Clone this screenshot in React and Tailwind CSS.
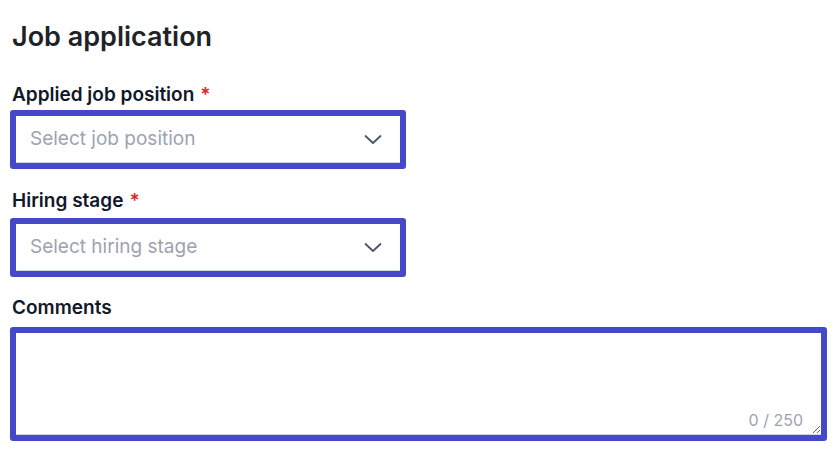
import { useState } from "react";

function Chevron() {
    return (
        <svg width="20" height="20" viewBox="0 0 20 20" fill="none" stroke="#4b5563" strokeWidth="1.8" strokeLinecap="round" strokeLinejoin="round">
            <path d="M2.5 7l7.5 7 7.5-7" />
        </svg>
    );
}

function Label({ children, required }) {
    return (
        <div className="h-[26px] flex items-center text-[19px] font-semibold text-[#111827] leading-none">
            {children}
            {required && <span className="text-[#dc2626] ml-[6px]">*</span>}
        </div>
    );
}

function SelectBox({ placeholder }) {
    return (
        <div className="ml-[-2px] w-[396px] h-[59px] border-[6px] border-[#4349c9] rounded-[3px] bg-white">
            <div className="h-full flex items-center justify-between pl-[14px] pr-[17px] border-b border-[#d1d5db]">
                <span className="text-[19px] text-[#9ca3af]">{placeholder}</span>
                <Chevron />
            </div>
        </div>
    );
}

export default function App() {
    const [comment, setComment] = useState("");

    return (
        <div className="w-[837px] h-[449px] bg-white pl-[12px] pt-[20px] font-['Inter','Noto_Sans',sans-serif] text-[#111827]">
            <h1 className="text-[27px] font-semibold leading-[34px] text-[#1f2328]">Job application</h1>

            <div className="mt-[27px]">
                <Label required>Applied job position</Label>
                <div className="mt-[3px]">
                    <SelectBox placeholder="Select job position" />
                </div>
            </div>

            <div className="mt-[18px]">
                <Label required>Hiring stage</Label>
                <div className="mt-[5px]">
                    <SelectBox placeholder="Select hiring stage" />
                </div>
            </div>

            <div className="mt-[17px]">
                <Label>Comments</Label>
                <div className="mt-[7px] ml-[-2px] w-[817px] h-[114px] border-[6px] border-[#4349c9] rounded-[3px] bg-white relative">
                    <textarea
                        value={comment}
                        onChange={(e) => setComment(e.target.value.slice(0, 250))}
                        className="block w-full h-full resize border-b border-[#d1d5db] outline-none px-3 py-2 text-[16px]"
                    />
                    <span className="absolute right-[18px] bottom-[3px] text-[16px] text-[#9ca3af] pointer-events-none">
                        {comment.length} / 250
                    </span>
                </div>
            </div>
        </div>
    );
}
